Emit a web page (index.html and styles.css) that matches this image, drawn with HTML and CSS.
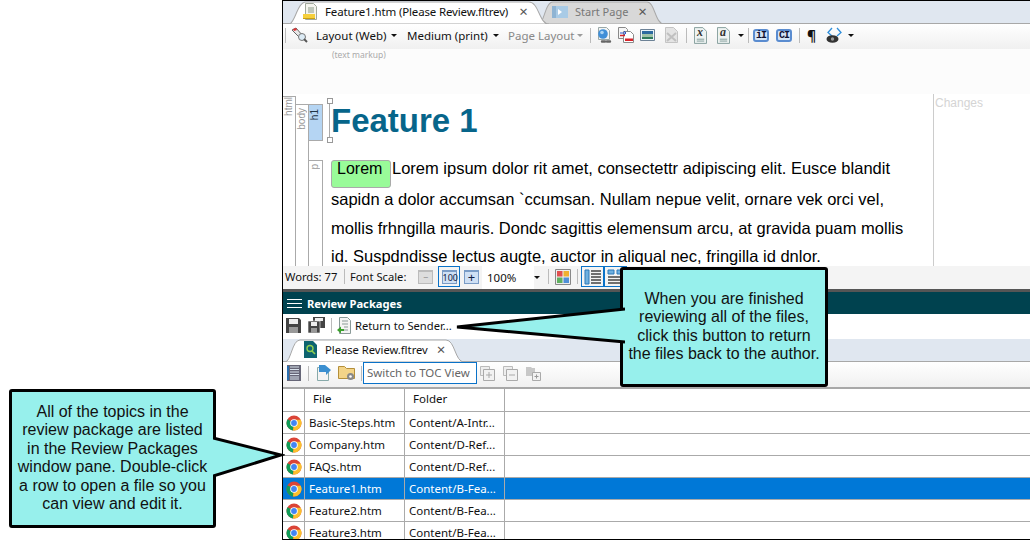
FILE: index.html
```html
<!DOCTYPE html>
<html lang="en">
<head>
  <meta charset="UTF-8" />
  <title>Review Packages</title>
  <link rel="stylesheet" href="styles.css">
</head>
<body>
  <svg class="defs" width="0" height="0">
    <symbol id="chrome" viewBox="0 0 16 16">
      <circle cx="8" cy="8" r="7.5" fill="#db4437"/>
      <path d="M8 8 1.5 4.2A7.5 7.5 0 0 0 7 15.4Z" fill="#0f9d58"/>
      <path d="M8 8 7 15.4A7.5 7.5 0 0 0 14.8 4.8H8Z" fill="#fbc02d"/>
      <circle cx="8" cy="8" r="3.8" fill="#fff"/>
      <circle cx="8" cy="8" r="2.9" fill="#4285f4"/>
    </symbol>
    <symbol id="caret" viewBox="0 0 6 3"><path d="M0 0h6L3 3Z" fill="#111"/></symbol>
    <symbol id="doc" viewBox="0 0 14 18">
      <path d="M.5.5h9l4 4v13H.5Z" fill="#eef3f2" stroke="#7f9a98"/>
      <path d="M3 13h8M3 15h8" stroke="#7f9a98"/>
    </symbol>
  </svg>

  <div class="window">
    <div class="tabstrip">
      <div class="tab tab-active">
        <svg class="tab-bg" viewBox="0 0 260 22" preserveAspectRatio="none"><path d="M0 22C6 22 8 1 17 1H240C250 1 250 22 260 22Z" fill="#fff" stroke="#a8a8a8"/></svg>
        <svg class="tab-icon" width="15" height="17" viewBox="0 0 15 17"><path d="M2.5.5h8l3 3v13h-11Z" fill="#f4f4ee" stroke="#a0a89c"/><path d="M5 5h6M5 7h6M5 9h6" stroke="#8a9a88"/><path d="M0 11h12v4H0Z" fill="#f5cf3c"/><path d="M0 15h12v1H0Z" fill="#c9a010"/></svg>
        <span class="tab-label">Feature1.htm (Please Review.fltrev)</span>
        <span class="tab-close">×</span>
      </div>
      <div class="tab tab-other">
        <svg class="tab-bg" viewBox="0 0 125 22" preserveAspectRatio="none"><path d="M0 22C5 22 6 1 14 1H108C116 1 116 22 125 22Z" fill="#d8d8d8" stroke="#a8a8a8"/></svg>
        <svg class="tab-icon" width="16" height="12" viewBox="0 0 16 12"><path d="M0 0h16v12H0Z" fill="#a9cbe6"/><path d="M0 0h4v12H0Z" fill="#8fb4d3"/><path d="M6 3l4 3-4 3Z" fill="#fff"/></svg>
        <span class="tab-label">Start Page</span>
        <span class="tab-close">×</span>
      </div>
    </div>

    <div class="toolbar main-bar">
      <i class="sep first"></i>
      <svg class="pencil" width="17" height="16" viewBox="0 0 17 16"><path d="M1 3l4-2 7 8-3 2Z" fill="#e8e8e8" stroke="#666"/><path d="M2 2l3-1 1 2-3 1Z" fill="#d33"/><circle cx="11" cy="10" r="3.5" fill="#dcebf5" stroke="#777"/><path d="M13 12l3 3" stroke="#555" stroke-width="2"/></svg>
      <span class="tb-text t-layout">Layout (Web)</span><svg class="caret" width="6" height="3"><use href="#caret"/></svg>
      <span class="tb-text t-medium">Medium (print)</span><svg class="caret" width="6" height="3"><use href="#caret"/></svg>
      <span class="tb-text t-page muted">Page Layout</span><svg class="caret faded" width="6" height="3"><use href="#caret"/></svg>
      <i class="sep s-a"></i>
      <svg class="ico-a" width="15" height="17" viewBox="0 0 15 17"><path d="M1.500.5h8l3 3v9h-11Z" fill="#f2f4f4" stroke="#9aa8a8"/><circle cx="6" cy="7" r="4.800" fill="#3f8fd8"/><circle cx="5" cy="5.500" r="1.800" fill="#a8d4f4"/><path d="M5 14.500h3M10 14.500h3" stroke="#666" stroke-width="2.400" stroke-linecap="round"/></svg>
      <svg class="ico-a" width="16" height="16" viewBox="0 0 16 16"><path d="M.5.5h7l2 2v9H.5Z" fill="#f6f6f6" stroke="#8a8a8a"/><path d="M5.500 4.500h7l3 3v8h-10Z" fill="#fff" stroke="#8a8a8a"/><path d="M2 6h6l-2-2M8 6l-2 2" fill="none" stroke="#2a55c5"/><path d="M2 8.500h5" stroke="#d8232a" stroke-width="1.500"/><path d="M7 11.500h8v2.500H7Z" fill="#d8232a"/></svg>
      <svg class="ico-a ico-img" width="15" height="12" viewBox="0 0 15 12"><path d="M.5.5h14v11H.5Z" fill="#eaf3fa" stroke="#6d8296"/><path d="M2 2h11v3H2Z" fill="#2d6aa0"/><path d="M2 5h11v3H2Z" fill="#9fc2a8"/><path d="M2 8h11v2H2Z" fill="#2f7a5c"/></svg>
      <svg class="ico-a ico-x" width="13" height="16" viewBox="0 0 13 16"><path d="M.5.5h8l4 4v11H.5Z" fill="#e4e4e4" stroke="#c4c4c4"/><path d="M2 6l9 8M11 6l-9 8" stroke="#c0c0c0" stroke-width="2"/></svg>
      <i class="sep s-b"></i>
      <svg class="ico-doc" width="13" height="17"><use href="#doc"/></svg>
      <span class="letter letter-x">x</span>
      <svg class="ico-doc ico-doc2" width="13" height="17"><use href="#doc"/></svg>
      <span class="letter letter-a">a</span>
      <svg class="caret c-a" width="6" height="3"><use href="#caret"/></svg>
      <i class="sep s-c"></i>
      <span class="blue-ico">iI</span>
      <span class="blue-ico">CI</span>
      <i class="sep s-d"></i>
      <span class="pilcrow">¶</span>
      <svg class="eye" width="17" height="18" viewBox="0 0 17 18"><path d="M6 2 2 6.500 6 10M11 2l4 4.500L11 10" fill="none" stroke="#2f8fdc" stroke-width="1.300"/><ellipse cx="6.500" cy="13" rx="6" ry="3.800" fill="#333"/><circle cx="6.500" cy="13" r="1.700" fill="#999"/></svg>
      <svg class="caret c-b" width="6" height="3"><use href="#caret"/></svg>
    </div>

    <div class="markup-bar"><span class="markup-label">(text markup)</span></div>

    <div class="editor">
      <div class="tag-col tag-html"><span class="tag-name">html</span></div>
      <div class="tag-col tag-body"><span class="tag-name">body</span></div>
      <div class="tag-stack">
        <div class="tag-box tag-h1"><span class="tag-name">h1</span></div>
        <div class="tag-box tag-p"><span class="tag-name">p</span></div>
      </div>
      <div class="doc">
        <h1 class="doc-title"><i class="handle handle-top"></i><i class="handle handle-bottom"></i>Feature 1</h1>
        <p class="doc-text"><span class="marker">Lorem</span>Lorem ipsum dolor rit amet, consectettr adipiscing elit. Eusce blandit<br>sapidn a dolor accumsan `ccumsan. Nullam nepue velit, ornare vek orci vel,<br>mollis frhngilla mauris. Dondc sagittis elemensum arcu, at gravida puam mollis<br>id. Suspdndisse lectus augte, auctor in aliqual nec, fringilla id dnlor.</p>
      </div>
      <div class="changes">Changes</div>
    </div>

    <div class="statusbar">
      <span class="st-words">Words: 77</span>
      <i class="sep st-s1"></i>
      <span class="st-scale">Font Scale:</span>
      <span class="scale-btn scale-off">−</span>
      <span class="scale-active"><span class="scale-btn scale-on">100</span></span>
      <span class="scale-btn scale-plus">+</span>
      <span class="zoom-box">100%<span class="zoom-drop"><svg class="caret" width="6" height="3"><use href="#caret"/></svg></span></span>
      <i class="sep st-s2"></i>
      <svg class="grid-ico" width="16" height="16" viewBox="0 0 16 16"><path d="M.5.5h15v15H.5Z" fill="#eee" stroke="#888"/><path d="M2 2h5.500v5.500H2Z" fill="#e05050"/><path d="M8.500 2H14v5.500H8.500Z" fill="#f0b030"/><path d="M2 8.500h5.500V14H2Z" fill="#60b060"/><path d="M8.500 8.500H14V14H8.500Z" fill="#5090d8"/></svg>
      <i class="sep st-s3"></i>
      <span class="view-btn"><svg width="18" height="16" viewBox="0 0 18 16"><path d="M1 1h4v14H1Z" fill="#6eb0e0" stroke="#2c78b8"/><path d="M7 2h10M7 5h10M7 8h10M7 11h10M7 14h10" stroke="#444" stroke-width="1.500"/></svg></span>
      <span class="view-btn"><svg width="18" height="16" viewBox="0 0 18 16"><path d="M1 1h6v4H1ZM10 1h6v4h-6Z" fill="#6eb0e0" stroke="#2c78b8"/><path d="M1 8h16M1 11h16M1 14h16" stroke="#444" stroke-width="1.500"/></svg></span>
    </div>

    <div class="pane-gap"></div>
    <div class="pane-title">
      <span class="burger"><i></i><i></i><i></i></span>
      <span>Review Packages</span>
    </div>

    <div class="toolbar review-bar">
      <svg class="rv-save" width="15" height="15" viewBox="0 0 15 15"><path d="M0 0h13l2 2v13H0Z" fill="#444"/><path d="M3 1h9v5H3Z" fill="#eee"/><path d="M3 9h9v6H3Z" fill="#999"/></svg>
      <svg class="rv-saveall" width="17" height="16" viewBox="0 0 17 16"><path d="M5 0h12v11H5Z" fill="#444"/><path d="M7 1h8v3H7Z" fill="#eee"/><path d="M0 4h12v12H0Z" fill="#444" stroke="#fff" stroke-width=".6"/><path d="M3 5h6v4H3Z" fill="#eee"/><path d="M3 11h6v5H3Z" fill="#999"/></svg>
      <i class="sep rv-sep"></i>
      <svg class="rv-return" width="14" height="17" viewBox="0 0 14 17"><path d="M2.500.5h8l3 3v13h-11Z" fill="#f4f4f4" stroke="#8a9a98"/><path d="M5 4h6M5 7h6M7 10h4M7 13h4" stroke="#8a9a98"/><path d="M0 13l4-3.500V12h3v2H4v2.500Z" fill="#3aa02c"/></svg>
      <span class="rv-text">Return to Sender...</span>
    </div>

    <div class="tabstrip lower-strip">
      <div class="tab tab-review">
        <svg class="tab-bg" viewBox="0 0 179 23" preserveAspectRatio="none"><path d="M0 23C6 23 7 1 15 1H161C170 1 170 23 179 23Z" fill="#fff" stroke="#a8a8a8"/></svg>
        <svg class="tab-icon" width="13" height="17" viewBox="0 0 13 17"><path d="M0 0h9l4 4v13H0Z" fill="#0e6470"/><circle cx="6" cy="7.500" r="3" fill="none" stroke="#8fd050" stroke-width="1.400"/><path d="M8 10l3 3" stroke="#8fd050" stroke-width="1.600"/></svg>
        <span class="tab-label">Please Review.fltrev</span>
        <span class="tab-close">×</span>
      </div>
    </div>

    <div class="toolbar list-bar">
      <svg class="ls-book" width="14" height="16" viewBox="0 0 14 16"><path d="M0 0h14v16H0Z" fill="#667"/><path d="M3 2h9M3 4.500h9M3 7h9M3 9.500h9M3 12h9M3 14h9" stroke="#d8e2ec" stroke-width="1.200"/><path d="M1 1v14" stroke="#2a6fb0" stroke-width="2"/></svg>
      <i class="sep ls-s1"></i>
      <svg class="ls-open" width="15" height="16" viewBox="0 0 15 16"><path d="M1.500 2.500h8l3 3v10h-11Z" fill="#f4f4f4" stroke="#8aa"/><path d="M3 0h6l6 5-5 5V7H3Z" fill="#3b8fd0"/></svg>
      <svg class="ls-folder" width="17" height="16" viewBox="0 0 17 16"><path d="M.5 1.500h6l2 2h8v10H.5Z" fill="#f3d488" stroke="#b48f3a"/><circle cx="12.500" cy="11.500" r="3.500" fill="#888"/><circle cx="12.500" cy="11.500" r="1.300" fill="#fff"/></svg>
      <i class="sep ls-s2"></i>
      <span class="toc-btn">Switch to TOC View</span>
      <svg class="ls-dis" width="15" height="15" viewBox="0 0 15 15"><path d="M.5.500h9v9h-9Z" fill="#eee" stroke="#bbb"/><path d="M3.500 3.500h11v11h-11Z" fill="#f2f2f2" stroke="#aaa"/><path d="M6 9h6M9 6v6" stroke="#aaa"/></svg>
      <svg class="ls-dis" width="15" height="15" viewBox="0 0 15 15"><path d="M.5.500h9v9h-9Z" fill="#eee" stroke="#bbb"/><path d="M3.500 3.500h11v11h-11Z" fill="#f2f2f2" stroke="#aaa"/><path d="M6 9h6" stroke="#aaa"/></svg>
      <svg class="ls-dis" width="15" height="15" viewBox="0 0 15 15"><path d="M0 1h5l1 1h3v8H0Z" fill="#c8c8c8"/><path d="M6.500 6.500h8v8h-8Z" fill="#f2f2f2" stroke="#aaa"/><path d="M8.500 10.500h4M10.500 8.500v4" stroke="#999"/></svg>
    </div>

    <div class="filegrid">
      <div class="row row-head"><span class="c-ico"></span><span class="c-file">File</span><span class="c-folder">Folder</span><span class="c-rest"></span></div>
      <div class="row"><span class="c-ico"><svg width="16" height="16"><use href="#chrome"/></svg></span><span class="c-file">Basic-Steps.htm</span><span class="c-folder">Content/A-Intr...</span><span class="c-rest"></span></div>
      <div class="row"><span class="c-ico"><svg width="16" height="16"><use href="#chrome"/></svg></span><span class="c-file">Company.htm</span><span class="c-folder">Content/D-Ref...</span><span class="c-rest"></span></div>
      <div class="row"><span class="c-ico"><svg width="16" height="16"><use href="#chrome"/></svg></span><span class="c-file">FAQs.htm</span><span class="c-folder">Content/D-Ref...</span><span class="c-rest"></span></div>
      <div class="row row-selected"><span class="c-ico"><svg width="16" height="16"><use href="#chrome"/></svg></span><span class="c-file">Feature1.htm</span><span class="c-folder">Content/B-Fea...</span><span class="c-rest"></span></div>
      <div class="row"><span class="c-ico"><svg width="16" height="16"><use href="#chrome"/></svg></span><span class="c-file">Feature2.htm</span><span class="c-folder">Content/B-Fea...</span><span class="c-rest"></span></div>
      <div class="row"><span class="c-ico"><svg width="16" height="16"><use href="#chrome"/></svg></span><span class="c-file">Feature3.htm</span><span class="c-folder">Content/B-Fea...</span><span class="c-rest"></span></div>
    </div>
  </div>

  <!-- callouts sit on top of the screenshot -->
  <div class="callout callout-files">
    <svg class="pointer pointer-files" width="72" height="44" viewBox="0 0 72 44"><path d="M0 2 68 19 0 40" fill="#97f0ec" stroke="#000" stroke-width="3"/></svg>
    All of the topics in the<br>review package are listed<br>in the Review Packages<br>window pane. Double-click<br>a row to open a file so you<br>can view and edit it.
  </div>
  <div class="callout callout-return">
    <svg class="pointer pointer-return" width="172" height="40" viewBox="0 0 172 40"><path d="M172 3 4 21 172 36" fill="#97f0ec" stroke="#000" stroke-width="3"/></svg>
    When you are finished<br>reviewing all of the files,<br>click this button to return<br>the files back to the author.
  </div>
</body>
</html>
```

FILE: styles.css
```css
body {
  margin: 0;
  height: 540px;
  overflow: hidden;
  background: #fff;
  font-family: 'Noto Sans', sans-serif;
  font-size: 12px;
  color: #111;
  position: relative;
}

.defs { position: absolute; }

.window {
  margin-left: 282px;
  width: 748px;
  height: 540px;
  box-sizing: border-box;
  border-top: 1px solid #000;
  border-left: 1px solid #000;
  border-bottom: 1px solid #000;
  overflow: hidden;
  display: flex;
  flex-direction: column;
}

/* Tabs */
.tabstrip {
  height: 22px;
  background: #e0e7f0;
  border-bottom: 1px solid #a8a8a8;
  display: flex;
  padding-left: 6px;
  flex: none;
}

.tab {
  position: relative;
  display: flex;
  align-items: center;
  height: 21px;
}

.tab-bg {
  position: absolute;
  top: 0;
  left: 0;
  width: 100%;
  height: 23px;
}

.tab-icon, .tab-label, .tab-close { position: relative; }

.tab-active {
  width: 260px;
  z-index: 1;
}
.tab-active .tab-icon { margin-left: 14px; }
.tab-active .tab-label { margin-left: 7px; font-size: 11.5px; letter-spacing: -.15px; }
.tab-active .tab-close { margin-left: 11px; }

.tab-other {
  width: 125px;
  margin-left: -10px;
  color: #777;
}
.tab-other .tab-icon { margin-left: 13px; }
.tab-other .tab-label { margin-left: 7px; font-size: 11px; }
.tab-other .tab-close { margin-left: 10px; }

.tab-close {
  font-size: 15px;
  line-height: 1;
  color: #555;
}

/* Toolbars */
.toolbar {
  display: flex;
  align-items: center;
  flex: none;
  box-sizing: border-box;
  padding-bottom: 3px;
  background: linear-gradient(#fff, #f0f0f0);
}

.sep {
  display: block;
  width: 1px;
  height: 15px;
  background: #bbb;
  flex: none;
}

.caret { flex: none; }
.faded { opacity: .4; }

.main-bar {
  height: 25px;
}
.sep.first { margin-left: 2px; }
.pencil { margin-left: 5px; }
.tb-text { font-size: 11.5px; white-space: nowrap; }
.t-layout { margin-left: 8px; width: 75px; }
.t-medium { margin-left: 10px; width: 86px; }
.t-page { margin-left: 9px; width: 69px; }
.muted { color: #888; }
.s-a { margin-left: 7px; }
.ico-a { margin-left: 6px; flex: none; }
.ico-x { margin-left: 10px; }
.s-b { margin-left: 8px; }
.ico-doc { margin-left: 7px; flex: none; }
.ico-doc2 { margin-left: 10px; }
.letter {
  font-family: 'Liberation Serif', serif;
  font-style: italic;
  font-size: 12px;
  font-weight: bold;
  width: 0;
  position: relative;
  left: -10px;
  top: -3px;
  color: #333;
}
.c-a { margin-left: 8px; }
.s-c { margin-left: 4px; }
.blue-ico {
  width: 12px;
  height: 9px;
  margin-left: 4px;
  border: 2px solid #5a8cd0;
  border-radius: 3px;
  background: #d4e4f6;
  font-family: 'Liberation Mono', monospace;
  font-size: 10px;
  font-weight: bold;
  line-height: 9px;
  text-align: center;
  letter-spacing: -1px;
  color: #113;
  flex: none;
}
.blue-ico + .blue-ico { margin-left: 7px; }
.s-d { margin-left: 7px; }
.pilcrow { margin-left: 7px; width: 9px; font-size: 14px; font-weight: bold; }
.eye { margin-left: 10px; flex: none; }
.c-b { margin-left: 5px; }

.markup-bar {
  height: 45px;
  background: #fcfcfc;
  flex: none;
}
.markup-label {
  display: block;
  margin-left: 49px;
  font-size: 8.5px;
  line-height: 12px;
  color: #aaa;
}

/* Editor */
.editor {
  height: 172px;
  display: flex;
  overflow: hidden;
  background: #fff;
  flex: none;
  font-family: 'Liberation Sans', sans-serif;
}

.tag-col, .tag-box {
  box-sizing: border-box;
  border-right: 1px solid #aaa;
  flex: none;
}
.tag-name {
  display: block;
  writing-mode: vertical-rl;
  transform: rotate(180deg);
  font-size: 10px;
  line-height: 12px;
  color: #999;
}

.tag-html { width: 13px; margin-top: 2px; border-top: 1px solid #aaa; }
.tag-body { width: 13px; margin-top: 10px; border-top: 1px solid #aaa; padding-top: 3px; }
.tag-stack { width: 14px; margin-top: 10px; flex: none; }
.tag-h1 {
  height: 37px;
  background: #b5d5f3;
  border: 1px solid #aaa;
  border-left: 0;
  padding-top: 4px;
}
.tag-h1 .tag-name { color: #234; }
.tag-p {
  margin-top: 19px;
  height: 120px;
  border-top: 1px solid #aaa;
  padding-top: 3px;
}

.doc {
  width: 610px;
  padding-left: 8px;
  flex: none;
  box-sizing: border-box;
}
.doc-title {
  position: relative;
  margin: 7px 0 0 0;
  height: 40px;
  font-size: 33px;
  line-height: 40px;
  font-weight: bold;
  color: #07658a;
}
.handle {
  position: absolute;
  left: -4px;
  width: 4px;
  height: 4px;
  border: 1px solid #999;
  background: #fff;
}
.handle-top { top: -3px; }
.handle-bottom { top: 36px; }
.handle-top::after {
  content: "";
  position: absolute;
  left: 1px;
  top: 5px;
  width: 1px;
  height: 34px;
  background: #aaa;
}

.doc-text {
  margin: 13px 0 0 0;
  font-size: 16.5px;
  line-height: 28.6px;
  color: #000;
  white-space: nowrap;
}
.marker {
  display: inline-block;
  position: relative;
  top: 6px;
  box-sizing: border-box;
  width: 60px;
  height: 28px;
  margin-right: 1px;
  margin-bottom: 3px;
  padding-left: 5px;
  background: #99fb99;
  border: 1px solid #aaa;
  border-radius: 3px;
  font-size: 16px;
  line-height: 15px;
  vertical-align: top;
}

.changes {
  border-left: 1px solid #ccc;
  padding: 2px 0 0 1px;
  width: 96px;
  font-size: 12px;
  color: #d4d4d4;
}

/* Status bar */
.statusbar {
  height: 23px;
  box-sizing: border-box;
  padding-bottom: 2px;
  background: #f4f4f4;
  display: flex;
  align-items: center;
  flex: none;
  font-size: 11.2px;
}
.st-words { margin-left: 2px; width: 56px; }
.st-s1 { margin-left: 3px; }
.st-scale { margin-left: 5px; width: 62px; }
.scale-btn {
  box-sizing: border-box;
  width: 15px;
  height: 14px;
  border: 1px solid #7a9cc6;
  border-top-width: 2px;
  background: #cfe0f4;
  font-size: 9px;
  line-height: 11px;
  text-align: center;
  color: #124;
}
.scale-off {
  margin-left: 6px;
  border-color: #bbb;
  background: #ddd;
  color: #888;
}
.scale-active {
  width: 22px;
  height: 21px;
  box-sizing: border-box;
  margin-left: 5px;
  border: 1px solid #0a72c8;
  display: flex;
  align-items: center;
  justify-content: center;
}
.scale-plus { margin-left: 4px; font-size: 13px; line-height: 10px; }
.zoom-box {
  margin-left: 3px;
  width: 63px;
  height: 23px;
  box-sizing: border-box;
  padding-left: 5px;
  margin-bottom: -2px;
  background: #fff;
  display: flex;
  align-items: center;
  justify-content: space-between;
  font-size: 11.5px;
}
.zoom-drop {
  width: 11px;
  height: 100%;
  background: #f4f4f4;
  display: flex;
  align-items: center;
}
.st-s2 { margin-left: 3px; }
.grid-ico { margin-left: 6px; flex: none; }
.st-s3 { margin-left: 6px; }
.view-btn {
  margin-left: 3px;
  box-sizing: border-box;
  width: 23px;
  height: 21px;
  border: 1px solid #0a72c8;
  display: flex;
  align-items: center;
  justify-content: center;
  flex: none;
}
.view-btn + .view-btn { margin-left: 0; }

.pane-gap {
  height: 3px;
  background: #555;
  flex: none;
}
.pane-title {
  height: 22px;
  background: #00424f;
  color: #fff;
  font-weight: bold;
  font-size: 11.2px;
  display: flex;
  align-items: center;
  gap: 5px;
  padding-left: 4px;
  flex: none;
}
.burger {
  display: flex;
  flex-direction: column;
  gap: 3px;
  width: 15px;
}
.burger i {
  display: block;
  height: 1px;
  background: #fff;
}

/* Review toolbar */
.review-bar {
  height: 25px;
  background: #fff;
}
.rv-save { margin-left: 3px; flex: none; }
.rv-saveall { margin-left: 7px; flex: none; }
.rv-sep { margin-left: 6px; }
.rv-return { margin-left: 5px; flex: none; }
.rv-text { margin-left: 4px; font-size: 11.2px; }

.lower-strip {
  height: 22px;
  padding-left: 2px;
}
.tab-review { width: 179px; }
.tab-review .tab-icon { margin-left: 19px; }
.tab-review .tab-label { margin-left: 8px; font-size: 11.2px; }
.tab-review .tab-close { margin-left: 9px; }

.list-bar {
  height: 27px;
  border-bottom: 2px solid #a8a8a8;
}
.ls-book { margin-left: 4px; flex: none; }
.ls-s1 { margin-left: 7px; }
.ls-open { margin-left: 7px; flex: none; }
.ls-folder { margin-left: 7px; flex: none; }
.ls-s2 { margin-left: 6px; }
.toc-btn {
  margin-left: 1px;
  box-sizing: border-box;
  width: 114px;
  height: 22px;
  border: 1px solid #0a72c8;
  background: #fff;
  color: #666;
  font-size: 11.5px;
  line-height: 20px;
  padding-left: 3px;
  white-space: nowrap;
}
.ls-dis { margin-left: 3px; flex: none; }
.ls-dis + .ls-dis { margin-left: 8px; }

/* File list */
.filegrid {
  font-size: 11.5px;
  flex: none;
}
.row {
  height: 22px;
  box-sizing: border-box;
  display: flex;
  border-bottom: 1px solid #aaa;
}
.row > span {
  display: flex;
  align-items: center;
  box-sizing: border-box;
  border-right: 1px solid #aaa;
  white-space: nowrap;
}
.c-ico { width: 22px; justify-content: center; }
.c-file { width: 100px; padding-left: 4px; }
.c-folder { width: 100px; padding-left: 4px; }
.c-rest { flex: 1; border-right: 0 !important; }

.row-head { height: 23px; }
.row > .c-file, .row > .c-folder { padding-bottom: 1px; }
.row-head > .c-file, .row-head > .c-folder { padding-left: 8px; padding-bottom: 3px; }

.row-selected {
  background: #0078d7;
  color: #fff;
}

/* Callouts */
.callout {
  position: absolute;
  box-sizing: border-box;
  background: #97f0ec;
  border: 3px solid #000;
  border-radius: 3px;
  font-family: 'Liberation Sans', sans-serif;
  font-size: 16px;
  line-height: 18.4px;
  text-align: center;
  color: #111;
  white-space: nowrap;
}
.pointer { position: absolute; }

.callout-files {
  left: 9px;
  top: 389px;
  width: 207px;
  height: 139px;
  padding-top: 11px;
}
.pointer-files {
  left: 201px;
  top: 44px;
}

.callout-return {
  left: 620px;
  top: 267px;
  width: 208px;
  height: 120px;
  padding-top: 20px;
}
.pointer-return {
  left: -170px;
  top: 36px;
}
```
